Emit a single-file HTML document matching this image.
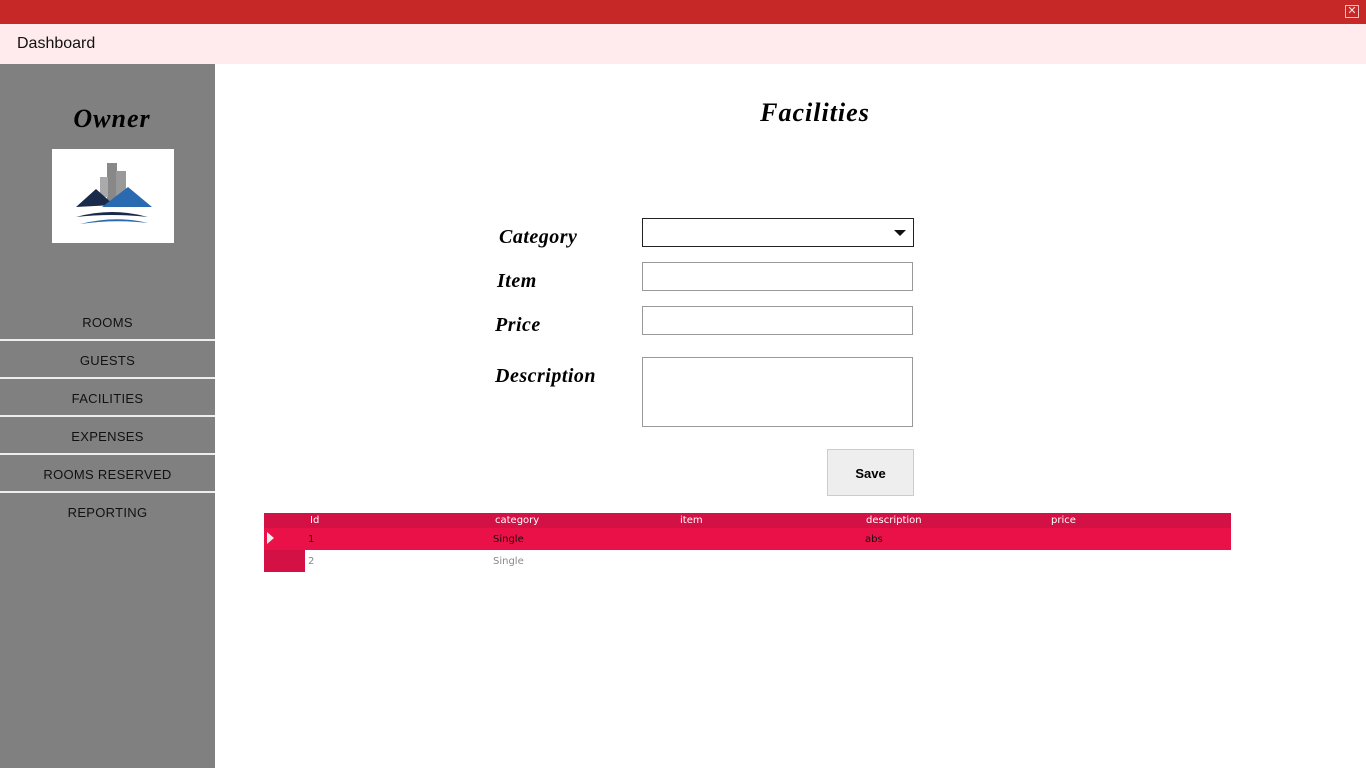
<!DOCTYPE html>
<html><head><meta charset="utf-8"><style>
*{margin:0;padding:0;box-sizing:border-box}
body{width:1366px;height:768px;overflow:hidden;background:#fff;font-family:"Liberation Sans",sans-serif;position:relative}
.abs{position:absolute}
.top{left:0;top:0;width:1366px;height:24px;background:#c62828}
.hdr{left:0;top:24px;width:1366px;height:40px;background:#ffebee;font-size:16px;color:#111;padding:11px 17px}
.side{left:0;top:64px;width:215px;height:704px;background:#808080}
.serif{font-family:"Liberation Serif",serif;font-style:italic;font-weight:bold;color:#000}
.nav{left:0;width:215px;height:36px;background:#808080;font-size:13px;letter-spacing:.3px;color:#111;text-align:center;line-height:36px;border-bottom:2px solid #eee}
.inp{background:#fff;border:1px solid #999}
.lbl{font-size:20px}
.grid{font-family:"DejaVu Sans",sans-serif;font-size:10px}
</style></head><body>
<div class="abs top"></div>
<div class="abs" style="left:1345px;top:5px;width:14px;height:13px;border:1px solid #f4c0c0;color:#fbe0e0;font-size:11px;line-height:10px;text-align:center">✕</div>
<div class="abs hdr">Dashboard</div>
<div class="abs side"></div>
<div class="abs serif" style="left:0;top:104px;width:224px;text-align:center;font-size:26px;letter-spacing:1px">Owner</div>
<div class="abs" style="left:52px;top:149px;width:122px;height:94px;background:#fff">
<svg width="122" height="94" viewBox="0 0 122 94">
<rect x="55" y="14" width="10" height="40" fill="#888"/><rect x="64" y="22" width="10" height="30" fill="#999"/><rect x="48" y="28" width="8" height="20" fill="#aaa"/>
<path d="M24 58 L44 40 L62 56 Z" fill="#1a2a4a"/><path d="M50 58 L76 38 L100 58 Z" fill="#2a6ab0"/>
<path d="M24 68 Q60 58 96 68 Q60 64 24 68Z" fill="#1a2a4a"/><path d="M28 75 Q64 66 96 74 Q62 70 28 75Z" fill="#2a6ab0"/>
</svg></div>
<div class="abs nav" style="top:305px">ROOMS</div>
<div class="abs nav" style="top:343px">GUESTS</div>
<div class="abs nav" style="top:381px">FACILITIES</div>
<div class="abs nav" style="top:419px">EXPENSES</div>
<div class="abs nav" style="top:457px">ROOMS RESERVED</div>
<div class="abs nav" style="top:495px;border:none">REPORTING</div>
<div class="abs serif" style="left:715px;top:98px;width:200px;text-align:center;font-size:26px;letter-spacing:1px">Facilities</div>
<div class="abs serif lbl" style="left:499px;top:226px;letter-spacing:.5px">Category</div>
<div class="abs serif lbl" style="left:497px;top:270px;letter-spacing:.5px">Item</div>
<div class="abs serif lbl" style="left:495px;top:314px;letter-spacing:.5px">Price</div>
<div class="abs serif lbl" style="left:495px;top:365px;letter-spacing:.5px">Description</div>
<div class="abs inp" style="left:642px;top:218px;width:272px;height:29px;border-color:#222"></div>
<div class="abs" style="left:894px;top:230px;width:0;height:0;border-left:6px solid transparent;border-right:6px solid transparent;border-top:6px solid #111"></div>
<div class="abs inp" style="left:642px;top:262px;width:271px;height:29px"></div>
<div class="abs inp" style="left:642px;top:306px;width:271px;height:29px"></div>
<div class="abs inp" style="left:642px;top:357px;width:271px;height:70px"></div>
<div class="abs" style="left:827px;top:449px;width:87px;height:47px;background:#eee;border:1px solid #ccc;font-family:'Liberation Sans',sans-serif;font-weight:bold;font-size:13px;text-align:center;line-height:47px">Save</div>
<div class="abs grid" style="left:264px;top:513px;width:967px;height:15px;background:#d31145;color:#fff">
<span class="abs" style="left:46px;top:2px">Id</span><span class="abs" style="left:231px;top:2px">category</span><span class="abs" style="left:416px;top:2px">item</span><span class="abs" style="left:602px;top:2px">description</span><span class="abs" style="left:787px;top:2px">price</span></div>
<div class="abs grid" style="left:264px;top:528px;width:967px;height:22px;background:#ea1149;color:#111">
<span class="abs" style="left:3px;top:4px;width:0;height:0;border-top:6px solid transparent;border-bottom:6px solid transparent;border-left:7px solid #eee"></span>
<span class="abs" style="left:44px;top:6px">1</span><span class="abs" style="left:229px;top:6px">Single</span><span class="abs" style="left:601px;top:6px">abs</span></div>
<div class="abs" style="left:264px;top:550px;width:41px;height:22px;background:#d31145"></div>
<div class="abs grid" style="left:308px;top:556px;color:#888">2</div>
<div class="abs grid" style="left:493px;top:556px;color:#888">Single</div>
</body></html>
